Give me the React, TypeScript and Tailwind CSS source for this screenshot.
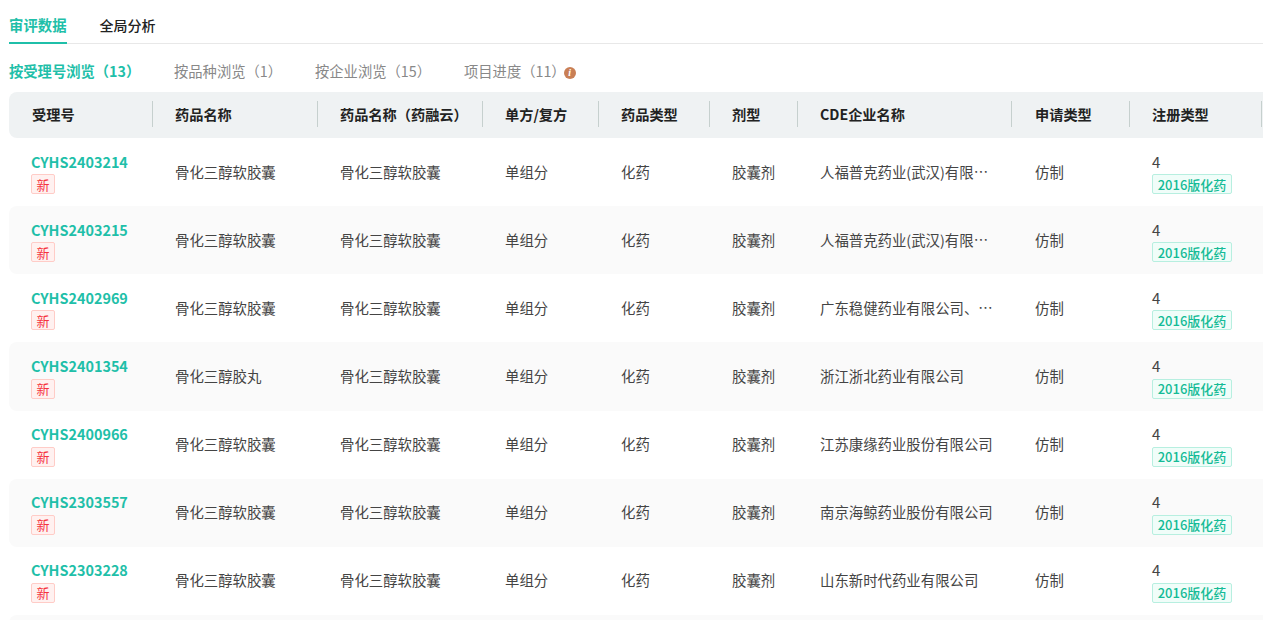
const columns = [
  { title: "受理号", width: "w-[144px]", pad: "pl-[23px]" },
  { title: "药品名称", width: "w-[165px]", pad: "pl-[22px]" },
  { title: "药品名称（药融云）", width: "w-[165px]", pad: "pl-[22px]" },
  { title: "单方/复方", width: "w-[116px]", pad: "pl-[22px]" },
  { title: "药品类型", width: "w-[111px]", pad: "pl-[22px]" },
  { title: "剂型", width: "w-[88px]", pad: "pl-[22px]" },
  { title: "CDE企业名称", width: "w-[214px]", pad: "pl-[22px]" },
  { title: "申请类型", width: "w-[118px]", pad: "pl-[23px]" },
  { title: "注册类型", width: "w-[132px]", pad: "pl-[22px]" },
];

const rows = [
  { no: "CYHS2403214", drug: "骨化三醇软胶囊", company: "人福普克药业(武汉)有限公司" },
  { no: "CYHS2403215", drug: "骨化三醇软胶囊", company: "人福普克药业(武汉)有限公司" },
  { no: "CYHS2402969", drug: "骨化三醇软胶囊", company: "广东稳健药业有限公司、广东稳健" },
  { no: "CYHS2401354", drug: "骨化三醇胶丸", company: "浙江浙北药业有限公司" },
  { no: "CYHS2400966", drug: "骨化三醇软胶囊", company: "江苏康缘药业股份有限公司" },
  { no: "CYHS2303557", drug: "骨化三醇软胶囊", company: "南京海鲸药业股份有限公司" },
  { no: "CYHS2303228", drug: "骨化三醇软胶囊", company: "山东新时代药业有限公司" },
  { no: "CYHS2303227", drug: "骨化三醇软胶囊", company: "山东新时代药业有限公司" },
];

const subTabs = [
  { label: "按品种浏览（1）", width: "w-[141px]" },
  { label: "按企业浏览（15）", width: "w-[149px]" },
];

export default function App() {
  return (
    <div className="h-[620px] w-[1263px] overflow-hidden bg-white pl-[9px] font-['Noto_Sans_CJK_SC','Noto_Sans',sans-serif] text-[14.4px] text-[#444]">
      {/* Top tabs */}
      <div className="flex h-[44px] items-start gap-[33px] border-b border-[#e8e8e8] pt-[14px]">
        <div className="h-[30px] border-b-2 border-[#1fbfa9] font-bold leading-[22px] text-[#1fbfa9]">审评数据</div>
        <div className="text-[14px] font-medium leading-[22px] text-[#222]">全局分析</div>
      </div>

      {/* Sub tabs */}
      <div className="flex h-[48px] items-center pt-[5px] text-[14.3px] leading-[22px] text-[#888]">
        <div className="w-[165px] font-bold text-[#1fbfa9]">按受理号浏览（13）</div>
        {subTabs.map((t) => (
          <div key={t.label} className={t.width}>{t.label}</div>
        ))}
        <div className="flex items-center">
          项目进度（11）
          <span className="ml-[-2px] mt-[4px] flex h-[12px] w-[12px] items-center justify-center rounded-full bg-[#c97f55] font-['Liberation_Serif',serif] text-[10px] font-bold italic leading-none text-white">i</span>
        </div>
      </div>

      {/* Table head */}
      <div className="flex h-[46px] w-[1270px] items-center rounded-l-lg bg-[#eff2f3] pb-[2px] text-[14.2px] font-bold text-[#222]">
        {columns.map((c) => (
          <div key={c.title} className={`${c.width} ${c.pad} flex h-[26px] shrink-0 items-center border-r border-[#c6d0ce] leading-[22px]`}>
            {c.title}
          </div>
        ))}
      </div>

      {/* Table body */}
      {rows.map((r, i) => (
        <div key={r.no} className={`flex h-[68.14px] w-[1270px] items-center rounded-lg ${i % 2 === 1 ? "bg-[#fafafa]" : "bg-white"}`}>
          <div className="w-[144px] shrink-0 pl-[22px] pt-[0.8px]">
            <div className="font-bold leading-[22px] text-[#1fbfa9]">{r.no}</div>
            <div className="mt-[1.5px] flex h-[20px] w-[24px] items-center justify-center rounded-[2px] border border-[#ffccc7] bg-[#fff1f0] text-[13px] leading-none text-[#f5333f]">新</div>
          </div>
          <div className="w-[165px] shrink-0 pb-[1.4px] pl-[22px]">{r.drug}</div>
          <div className="w-[165px] shrink-0 pb-[1.4px] pl-[22px]">骨化三醇软胶囊</div>
          <div className="w-[116px] shrink-0 pb-[1.4px] pl-[22px]">单组分</div>
          <div className="w-[111px] shrink-0 pb-[1.4px] pl-[22px]">化药</div>
          <div className="w-[88px] shrink-0 pb-[1.4px] pl-[22px]">胶囊剂</div>
          <div className="w-[214px] shrink-0 pb-[1.4px] pl-[22px] pr-[19px]">
            <div className="truncate">{r.company}</div>
          </div>
          <div className="w-[118px] shrink-0 pb-[1.4px] pl-[23px]">仿制</div>
          <div className="w-[132px] shrink-0 pl-[22px] pt-[0.8px]">
            <div className="text-[15px] leading-[22px]">4</div>
            <div className="mt-[1.5px] flex h-[20px] w-[80px] items-center justify-center rounded-[2px] border border-[#b7efe0] bg-[#f0fdf9] text-[13px] font-medium leading-none text-[#14bb96]">2016版化药</div>
          </div>
        </div>
      ))}
    </div>
  );
}
